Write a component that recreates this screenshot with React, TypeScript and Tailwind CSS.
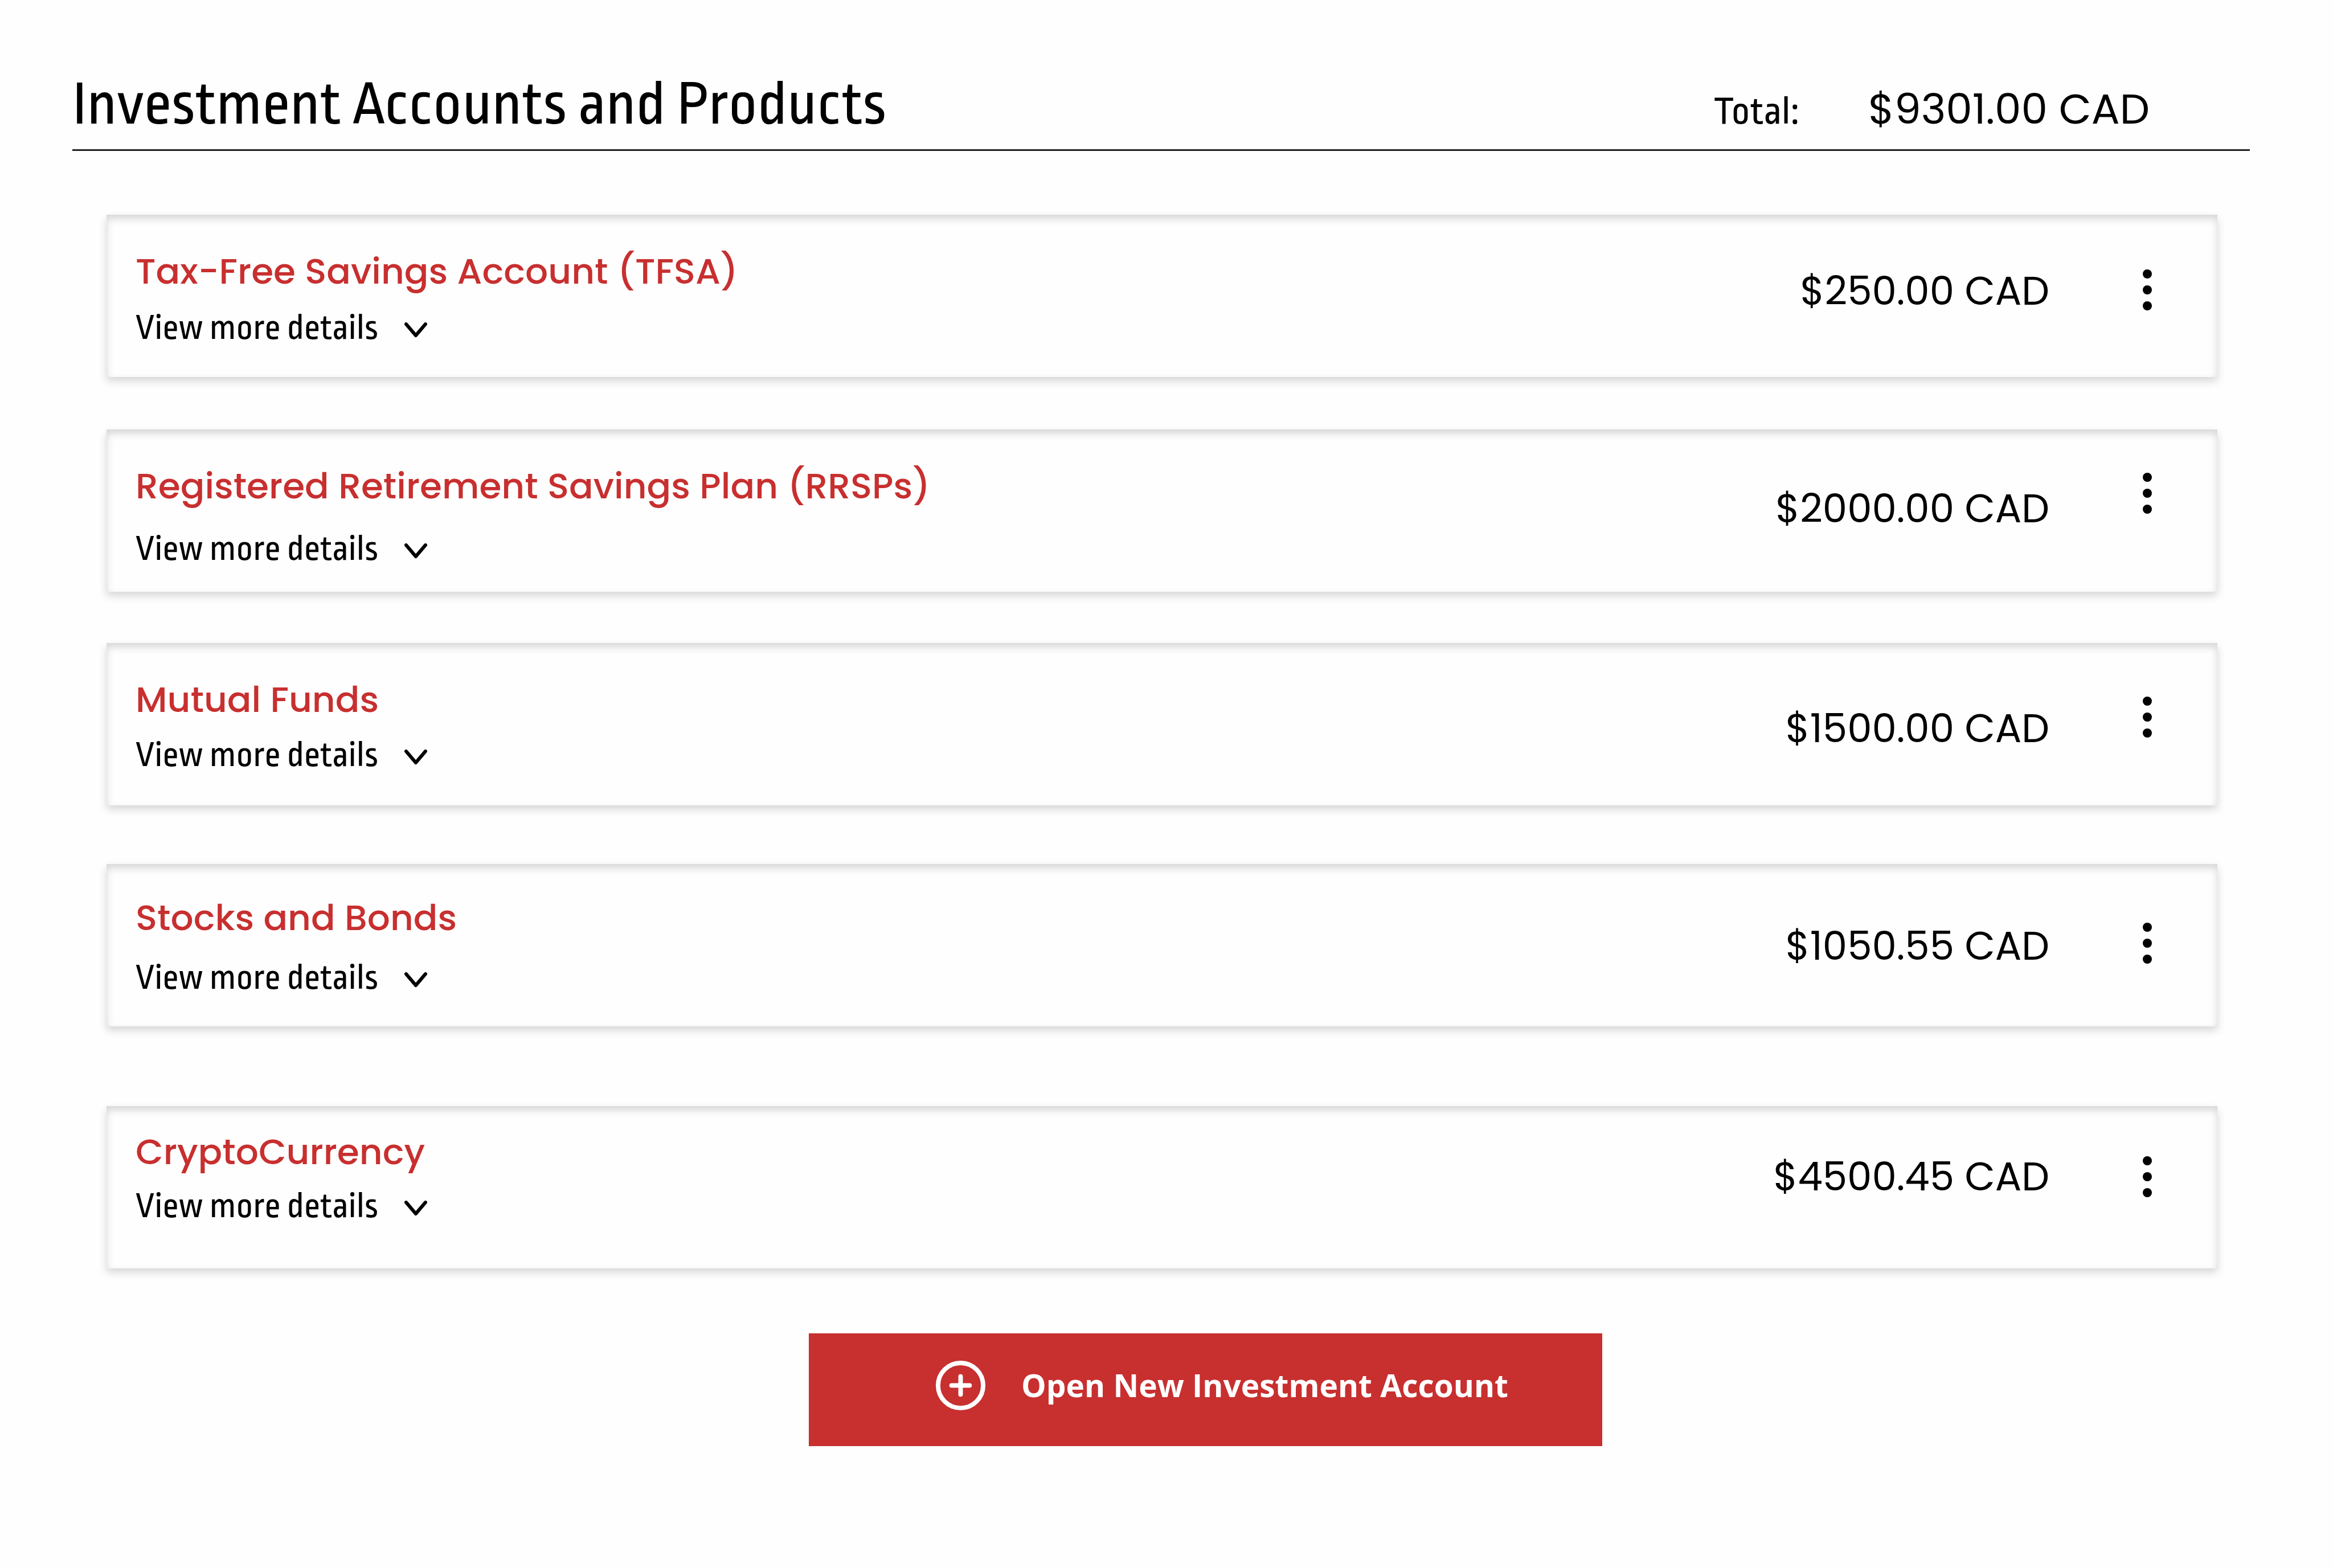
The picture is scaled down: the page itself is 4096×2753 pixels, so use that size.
import { CirclePlus } from "lucide-react";

type Account = {
  id: string;
  name: string;
  amount: string;
  cardSpace: string;
  nameSpace: string;
  detailsSpace: string;
  amountSpace: string;
  menuSpace: string;
};

const accounts: Account[] = [
  {
    id: "tfsa",
    name: "Tax-Free Savings Account (TFSA)",
    amount: "$250.00 CAD",
    cardSpace: "mt-[112px]",
    nameSpace: "pt-[63px]",
    detailsSpace: "mt-[32px]",
    amountSpace: "mt-[98px]",
    menuSpace: "mt-[96px]",
  },
  {
    id: "rrsp",
    name: "Registered Retirement Savings Plan (RRSPs)",
    amount: "$2000.00 CAD",
    cardSpace: "mt-[92px]",
    nameSpace: "pt-[63px]",
    detailsSpace: "mt-[43px]",
    amountSpace: "mt-[103px]",
    menuSpace: "mt-[76px]",
  },
  {
    id: "mutual",
    name: "Mutual Funds",
    amount: "$1500.00 CAD",
    cardSpace: "mt-[90px]",
    nameSpace: "pt-[63px]",
    detailsSpace: "mt-[30px]",
    amountSpace: "mt-[114px]",
    menuSpace: "mt-[94px]",
  },
  {
    id: "stocks",
    name: "Stocks and Bonds",
    amount: "$1050.55 CAD",
    cardSpace: "mt-[103px]",
    nameSpace: "pt-[58px]",
    detailsSpace: "mt-[38px]",
    amountSpace: "mt-[108px]",
    menuSpace: "mt-[103px]",
  },
  {
    id: "crypto",
    name: "CryptoCurrency",
    amount: "$4500.45 CAD",
    cardSpace: "mt-[140px]",
    nameSpace: "pt-[44px]",
    detailsSpace: "mt-[28px]",
    amountSpace: "mt-[88px]",
    menuSpace: "mt-[88px]",
  },
];

function Chevron() {
  return (
    <svg
      viewBox="0 0 40 27"
      className="mt-[6px] h-[27px] w-[40px]"
      fill="none"
      stroke="currentColor"
      strokeWidth="6"
      strokeLinecap="round"
      strokeLinejoin="round"
      aria-hidden="true"
    >
      <path d="M3 3 L20 23 L37 3" />
    </svg>
  );
}

function Dots() {
  return (
    <svg viewBox="0 0 16 72" className="h-[72px] w-[16px]" fill="currentColor" aria-hidden="true">
      <circle cx="8" cy="8" r="8" />
      <circle cx="8" cy="36" r="8" />
      <circle cx="8" cy="64" r="8" />
    </svg>
  );
}

function AccountCard({ account }: { account: Account }) {
  return (
    <li
      className={`flex min-h-[285px] items-start pr-[115px] pl-[51px] shadow-[0_7px_14px_rgba(0,0,0,0.16),inset_0_7px_14px_rgba(0,0,0,0.16)] ${account.cardSpace}`}
    >
      <div className={`flex flex-1 flex-col items-start ${account.nameSpace}`}>
        <h2 className="text-[63px] leading-[72px] font-medium text-[#c82f2f]">{account.name}</h2>
        <button
          type="button"
          className={`flex items-center gap-[46px] font-['Ropa_Sans','Fira_Sans_Condensed',sans-serif] text-[63px] leading-[64px] ${account.detailsSpace}`}
        >
          View more details
          <Chevron />
        </button>
      </div>
      <p className={`text-[69px] leading-[72px] ${account.amountSpace}`}>{account.amount}</p>
      <button type="button" aria-label={`Options for ${account.name}`} className={`ml-[164px] ${account.menuSpace}`}>
        <Dots />
      </button>
    </li>
  );
}

export default function App() {
  return (
    <main className="min-h-screen bg-[#fefefe] pr-[146px] pl-[127px] font-['Poppins','Open_Sans',sans-serif] text-black">
      <header className="flex items-baseline border-b-3 border-[#222222] pt-[134px] pr-[176px] pb-[26px]">
        <h1 className="flex-1 font-['Ropa_Sans','Fira_Sans_Condensed',sans-serif] text-[109px] leading-[100px]">
          Investment Accounts and Products
        </h1>
        <p className="flex items-baseline gap-[121px]">
          <span className="font-['Ropa_Sans','Fira_Sans_Condensed',sans-serif] text-[70px] leading-[80px]">Total:</span>
          <span className="text-[74px] leading-[80px]">$9301.00 CAD</span>
        </p>
      </header>
      <ul className="pr-[57px] pl-[60px]">
        {accounts.map((account) => (
          <AccountCard key={account.id} account={account} />
        ))}
      </ul>
      <div className="mt-[114px] flex justify-center pl-[156px]">
        <button
          type="button"
          className="flex h-[198px] w-[1393px] items-center gap-[59px] bg-[#c82f2f] pb-[16px] pl-[219px] font-['Segoe_UI','Open_Sans',sans-serif] text-[55px] leading-[64px] font-bold text-white"
        >
          <CirclePlus size={95} strokeWidth={2} aria-hidden="true" />
          Open New Investment Account
        </button>
      </div>
    </main>
  );
}
